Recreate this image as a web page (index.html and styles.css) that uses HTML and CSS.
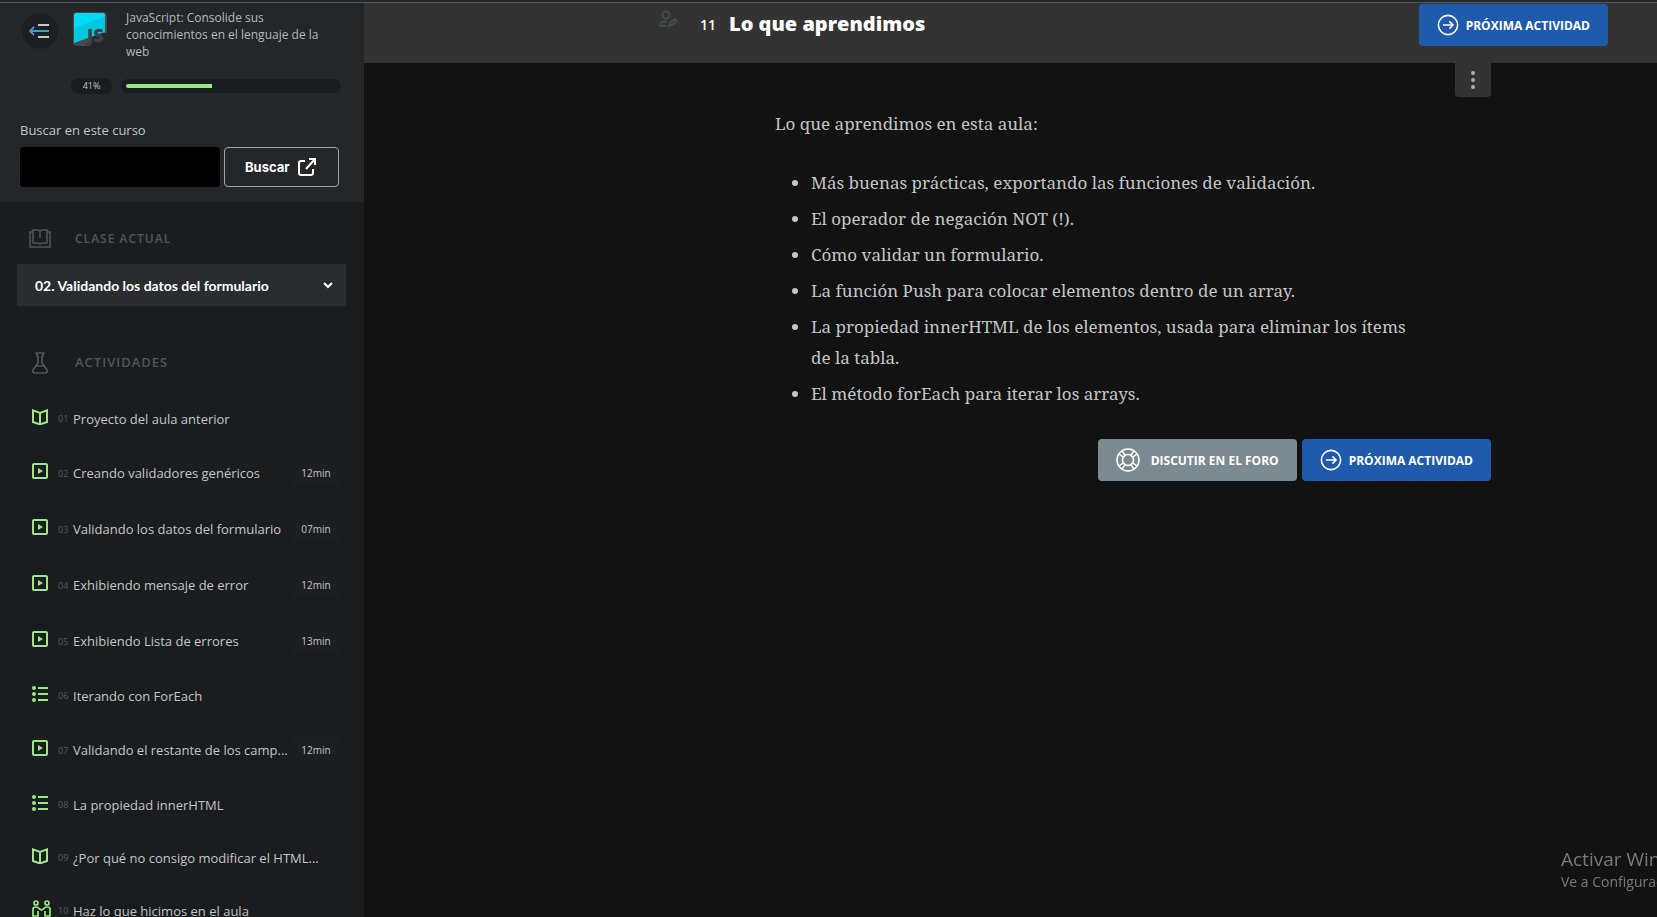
FILE: index.html
```html
<!DOCTYPE html>
<html lang="es">
<head>
<meta charset="utf-8">
<title>Lo que aprendimos</title>
<link rel="stylesheet" href="styles.css">
</head>
<body>
<svg class="sprite" aria-hidden="true">
  <symbol id="video" viewBox="0 0 16 16"><rect x="1" y="1" width="14" height="14" rx="1" fill="none" stroke="currentColor" stroke-width="2"/><path d="M6 5v6l5-3z" fill="currentColor"/></symbol>
  <symbol id="book" viewBox="0 0 16 16"><path d="M1 1.400L8 4l7-2.600V13l-7 2.400L1 13zM8 4v11" fill="none" stroke="currentColor" stroke-width="2"/></symbol>
  <symbol id="list" viewBox="0 0 16 16"><path d="M6 2h10M6 8h10M6 14h10" stroke="currentColor" stroke-width="2"/><circle cx="2" cy="2" r="2" fill="currentColor"/><circle cx="2" cy="8" r="2" fill="currentColor"/><circle cx="2" cy="14" r="2" fill="currentColor"/></symbol>
  <symbol id="people" viewBox="0 0 19 17"><g fill="none" stroke="currentColor" stroke-width="1.700"><circle cx="4" cy="3" r="2"/><circle cx="15" cy="3" r="2"/><path d="M6 11v5H1V9q0-2 3-2 2 0 3 1.500L9.500 10 12 8.500Q13 7 15 7q3 0 3 2v7h-5v-5"/></g></symbol>
  <symbol id="next" viewBox="0 0 24 24"><g fill="none" stroke="currentColor" stroke-width="1.700"><circle cx="12" cy="12" r="10.500"/><path d="M6.500 12h11M13.500 8l4 4-4 4"/></g></symbol>
</svg>
<div class="app">
  <aside class="sidebar">
    <div class="course">
      <div class="course-head">
        <button class="collapse" aria-label="Ocultar menú"><svg width="22" height="16" viewBox="0 0 22 16" fill="none" stroke-width="1.800"><path d="M9 2h11M9 14h11" stroke="#c0c6c9"/><path d="M20 8H1M5 4L1 8l4 4" stroke="#3d9bd4"/></svg></button>
        <svg class="logo" width="36" height="36" viewBox="0 0 36 36"><path d="M5 1h26q4 0 4 4v17H18v13H5q-4 0-4-4V5q0-4 4-4z" fill="#47494d"/><path d="M5 2h25q3 0 3 3v16L2 32V5q0-3 3-3z" fill="#00c8e0"/><path d="M5 2h25q3 0 3 3L2 17V5q0-3 3-3z" fill="#00dcf5"/><text class="logo-text" x="15" y="31">JS</text></svg>
        <h2 class="course-name">JavaScript: Consolide sus conocimientos en el lenguaje de la web</h2>
      </div>
      <div class="progress"><span class="percent">41%</span><span class="track"><span class="fill"></span></span></div>
      <form class="search">
        <label for="q">Buscar en este curso</label>
        <div class="search-row"><input id="q" type="text"><button type="button">Buscar<svg width="20" height="20" viewBox="0 0 20 20" fill="none" stroke="#fff" stroke-width="2"><path d="M8 4H4Q2 4 2 6v10q0 2 2 2h10q2 0 2-2v-4M12 2h6v6M18 2L9 12"/></svg></button></div>
      </form>
    </div>
    <div class="section-title class-title"><svg width="22" height="19" viewBox="0 0 22 19" fill="none" stroke="currentColor" stroke-width="1.500"><path d="M4 3H1v15h20V3h-3M4 1h5l2 1 2-1h5v13h-5l-2 1-2-1H4zM11 2v7"/></svg>CLASE ACTUAL</div>
    <select class="lesson" aria-label="Clase actual"><option>02. Validando los datos del formulario</option></select>
    <div class="section-title activities-title"><svg width="22" height="23" viewBox="0 0 22 23" fill="none" stroke="currentColor" stroke-width="1.700"><path d="M6 2h10M8 2v3h1v7l-5 7q-1 3 2 3h10q3 0 2-3l-5-7V5h1V2M6 15h10"/></svg>ACTIVIDADES</div>
    <nav class="activities">
      <a href="#"><svg><use href="#book"/></svg><small>01</small><span class="name">Proyecto del aula anterior</span></a>
      <a href="#" class="video"><svg><use href="#video"/></svg><small>02</small><span class="name">Creando validadores genéricos</span><span class="time">12min</span></a>
      <a href="#" class="video"><svg><use href="#video"/></svg><small>03</small><span class="name">Validando los datos del formulario</span><span class="time">07min</span></a>
      <a href="#" class="video"><svg><use href="#video"/></svg><small>04</small><span class="name">Exhibiendo mensaje de error</span><span class="time">12min</span></a>
      <a href="#" class="video"><svg><use href="#video"/></svg><small>05</small><span class="name">Exhibiendo Lista de errores</span><span class="time">13min</span></a>
      <a href="#"><svg><use href="#list"/></svg><small>06</small><span class="name">Iterando con ForEach</span></a>
      <a href="#" class="video"><svg><use href="#video"/></svg><small>07</small><span class="name">Validando el restante de los camp...</span><span class="time">12min</span></a>
      <a href="#"><svg><use href="#list"/></svg><small>08</small><span class="name">La propiedad innerHTML</span></a>
      <a href="#"><svg><use href="#book"/></svg><small>09</small><span class="name">¿Por qué no consigo modificar el HTML...</span></a>
      <a href="#"><svg class="wide"><use href="#people"/></svg><small>10</small><span class="name">Haz lo que hicimos en el aula</span></a>
    </nav>
  </aside>
  <main class="main">
    <header class="topbar">
      <svg class="edit" width="20" height="18" viewBox="0 0 20 18" fill="none" stroke="currentColor" stroke-width="2"><circle cx="8" cy="5" r="3.600"/><path d="M9 16H2q0-5 7-4.500M11 16l1-3 5-4 2 2-5 4z"/></svg>
      <span class="number">11</span><h1>Lo que aprendimos</h1>
      <a class="button" href="#"><svg><use href="#next"/></svg>PRÓXIMA ACTIVIDAD</a>
    </header>
    <div class="content">
      <button class="more" aria-label="Más opciones"><svg width="4" height="18" viewBox="0 0 4 18" fill="#a9b1b4"><circle cx="2" cy="2" r="2"/><circle cx="2" cy="9" r="2"/><circle cx="2" cy="16" r="2"/></svg></button>
      <article class="lesson-text">
        <p>Lo que aprendimos en esta aula:</p>
        <ul>
          <li>Más buenas prácticas, exportando las funciones de validación.</li>
          <li>El operador de negación NOT (!).</li>
          <li>Cómo validar un formulario.</li>
          <li>La función Push para colocar elementos dentro de un array.</li>
          <li>La propiedad innerHTML de los elementos, usada para eliminar los ítems de la tabla.</li>
          <li>El método forEach para iterar los arrays.</li>
        </ul>
      </article>
      <div class="actions">
        <a class="button forum" href="#"><svg viewBox="0 0 24 24" fill="none" stroke="currentColor" stroke-width="1.500"><circle cx="12" cy="12" r="11"/><circle cx="12" cy="12" r="5.500"/><path d="M7 9L3 6M9 7L6 3M15 7l3-4M17 9l4-3M17 15l4 3M15 17l3 4M9 17l-3 4M7 15l-4 3"/></svg>DISCUTIR EN EL FORO</a>
        <a class="button" href="#"><svg><use href="#next"/></svg>PRÓXIMA ACTIVIDAD</a>
      </div>
    </div>
  </main>
</div>
<div class="watermark"><div class="watermark-title">Activar Windows</div><div>Ve a Configuración</div></div>
</body>
</html>
```
FILE: styles.css
```css
* { box-sizing: border-box; }
body { margin: 0; background: #121212; color: #c3c5c6; font-family: "Open Sans", sans-serif; font-size: 13px; }
h1, h2, p, ul { margin: 0; padding: 0; }
button, input, select { font: inherit; }
a { color: inherit; text-decoration: none; }
svg { flex: none; }
.sprite { position: absolute; width: 0; height: 0; }
.app { display: flex; height: 100vh; overflow: hidden; border-top: 2px solid #24282b; }
.sidebar { flex: none; width: 364px; overflow: hidden; background: #1a1d1f; border-top: 1px solid #56595b; }
.course { background: #24272a; height: 199px; padding: 8px 23px 0 20px; }
.course-head { display: flex; align-items: flex-start; height: 66px; }
.collapse { display: flex; align-items: center; justify-content: center; width: 36px; height: 36px; margin: 2px 14px 0 2px; padding: 0; border: 0; border-radius: 50%; background: #1c1f21; }
.logo { margin-right: 18px; }
.logo-text { font: 800 18px "Open Sans", sans-serif; fill: #3d4145; }
.course-name { flex: 1; margin-top: -2px; font-size: 12px; font-weight: 400; line-height: 17px; color: #b0b9bd; }
.progress { display: flex; align-items: center; gap: 9px; height: 16px; margin-left: 51px; margin-top: 1px; }
.percent { width: 41px; line-height: 16px; border-radius: 8px; background: #1a1d1f; font-size: 9px; text-align: center; }
.track { flex: 1; height: 14px; padding: 5px; border-radius: 7px; background: #1a1d1f; }
.fill { display: block; width: 41%; height: 4px; border-radius: 2px 0 0 2px; background: #9ee682; }
.search { margin-top: 26px; }
.search label { display: block; line-height: 20px; margin-bottom: 7px; }
.search-row { display: flex; gap: 4px; }
.search input { width: 200px; height: 40px; border: 0; border-radius: 4px; background: #000; color: #fff; }
.search button { display: flex; align-items: center; justify-content: flex-start; gap: 7px; width: 115px; height: 40px; padding: 0 0 0 20px; border: 1px solid #a0a4a7; border-radius: 4px; background: transparent; color: #fff; font-family: Inter, sans-serif; font-size: 13px; font-weight: 700; }
.section-title { display: flex; align-items: center; gap: 24px; height: 24px; color: #50565a; font-weight: 600; letter-spacing: 1px; }
.class-title { margin: 24px 0 14px 29px; font-size: 12px; }
.lesson { display: block; width: 329px; height: 42px; margin-left: 17px; padding: 0 18px; border: 0; color: #fff; font-family: Lato, sans-serif; font-size: 14px; font-weight: 700; appearance: none; background: #2a2d30 url("data:image/svg+xml,%3Csvg xmlns='http://www.w3.org/2000/svg' width='10' height='7'%3E%3Cpath d='M1 1l4 4 4-4' fill='none' stroke='white' stroke-width='2'/%3E%3C/svg%3E") no-repeat right 13px center; }
.activities-title { margin: 44px 0 18px 29px; }
.activities a { display: flex; align-items: center; height: 53px; padding: 0 24px 0 32px; }
.activities a.video { height: 56px; }
.activities svg { width: 16px; height: 16px; margin-right: 10px; margin-bottom: 4px; color: #9ee682; }
.activities svg.wide { width: 19px; height: 17px; margin-right: 7px; }
.activities small { width: 15px; color: #55595c; font-size: 9px; }
.name { flex: 1; white-space: nowrap; }
.time { width: 48px; line-height: 24px; background: #1c1f21; font-size: 10px; text-align: center; }
.main { flex: 1; min-width: 0; }
.topbar { display: flex; align-items: flex-start; height: 61px; padding: 1px 49px 0 294px; border-top: 1px solid #56595b; background: #333; color: #fff; }
.edit { margin-top: 6px; color: #444b50; }
.number { width: 29px; margin-left: 22px; line-height: 42px; font-size: 14px; font-weight: 600; }
h1 { flex: 1; font-size: 20px; line-height: 40px; font-weight: 800; }
.button { display: flex; align-items: center; gap: 7px; height: 42px; padding: 0 18px; border-radius: 4px; background: #1f5bac; color: #fff; font-size: 12px; font-weight: 700; white-space: nowrap; }
.button svg { width: 22px; height: 22px; }
.content { margin: 0 166px 0 411px; }
.more { display: flex; align-items: center; justify-content: center; width: 36px; height: 34px; margin-left: auto; padding: 0; border: 0; border-radius: 0 0 4px 4px; background: #333; }
.lesson-text { max-width: 640px; padding-top: 11px; font-family: "Source Serif Pro", "Noto Serif", "Liberation Serif", serif; font-size: 17px; line-height: 31px; }
.lesson-text ul { margin-top: 28px; padding-left: 36px; }
.lesson-text li { margin-bottom: 5px; }
.actions { display: flex; justify-content: flex-end; gap: 5px; margin-top: 30px; }
.forum { gap: 11px; background: #7b8a90; }
.forum svg { width: 24px; height: 24px; }
.watermark { position: fixed; left: calc(100% - 96px); right: 0; bottom: 26px; overflow: hidden; white-space: nowrap; color: #77797a; font-size: 14px; line-height: 18px; }
.watermark-title { font-size: 19px; line-height: 27px; }
```
